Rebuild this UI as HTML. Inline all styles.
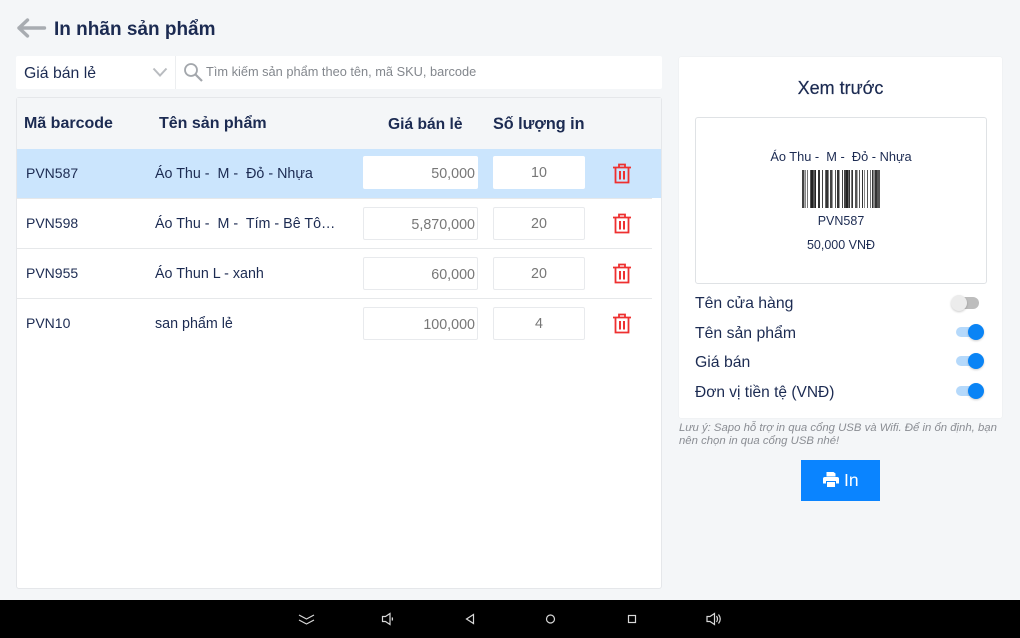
<!DOCTYPE html>
<html lang="vi"><head><meta charset="utf-8"><title>In nhãn sản phẩm</title>
<style>
html,body{margin:0;padding:0}
body{width:1020px;height:638px;overflow:hidden;background:#f4f6f8;position:relative;font-family:"Liberation Sans",sans-serif;color:#1c2b52}
.a{position:absolute}
.t{position:absolute;white-space:nowrap;line-height:20px;height:20px}
.b{font-weight:bold}
.h{font-weight:bold;font-size:16px}
.c1{font-size:14.300px}
.n{font-size:14.300px}
.l{font-size:15.800px}
.inp{position:absolute;box-sizing:border-box;background:#fff;border:1px solid #e8eaed;border-radius:2px;color:#777;font-size:14.300px;line-height:31px;height:33px}
.r{text-align:right;padding-right:2px;width:115px;left:363px;line-height:35px}
.c{text-align:center;width:92px;left:493px;line-height:32px}
.line{position:absolute;left:17px;width:635px;height:1px;background:#e6e8ea}
.sw{position:absolute;left:956px;width:29px;height:18px}
.sw i{position:absolute;left:0;top:4px;width:24px;height:10px;border-radius:5px;background:#b5d9fb}
.sw b{position:absolute;left:12px;top:1px;width:16px;height:16px;border-radius:50%;background:#0a84f5;box-shadow:0 1px 2px rgba(0,0,0,.2)}
</style></head><body>
<svg class="a" style="left:15px;top:16px" width="32" height="24" viewBox="0 0 32 24"><path d="M12.500 4 4 12l8.500 8M4 12h25.500" fill="none" stroke="#a8acb1" stroke-width="3.400" stroke-linejoin="round" stroke-linecap="round"/></svg>
<div class="t b" style="left:54px;top:19px;font-size:19px;line-height:22px;height:22px">In nhãn sản phẩm</div>

<div class="a" style="left:16px;top:56px;width:646px;height:33px;background:#fff;border-radius:2px"></div>
<div class="a" style="left:175px;top:56px;width:1px;height:33px;background:#eceef0"></div>
<div class="t" style="left:24px;top:64px;font-size:15.800px">Giá bán lẻ</div>
<svg class="a" style="left:152px;top:67px" width="16" height="11" viewBox="0 0 16 11"><path d="M1.500 1.500 8 8.500 14.500 1.500" fill="none" stroke="#b9bcc0" stroke-width="2"/></svg>
<svg class="a" style="left:183px;top:62px" width="21" height="21" viewBox="0 0 21 21"><circle cx="8" cy="8" r="6" fill="none" stroke="#a3a7ac" stroke-width="1.800"/><path d="m12.500 12.500 6.500 6.500" stroke="#a3a7ac" stroke-width="2.200"/></svg>
<div class="t" style="left:206px;top:62px;font-size:12.800px;color:#83878d">Tìm kiếm sản phẩm theo tên, mã SKU, barcode</div>

<div class="a" style="left:16px;top:97px;width:646px;height:492px;box-sizing:border-box;background:#fff;border:1px solid #e5e7ea;border-radius:3px"></div>
<div class="a" style="left:17px;top:98px;width:644px;height:51px;background:#f4f6f8"></div>
<div class="t h" style="left:24px;top:114px">Mã barcode</div>
<div class="t h" style="left:159px;top:114px">Tên sản phẩm</div>
<div class="t h" style="left:388px;top:115px;font-size:15.600px">Giá bán lẻ</div>
<div class="t h" style="left:493px;top:114px;font-size:16.200px">Số lượng in</div>

<div class="a" style="left:17px;top:149px;width:644px;height:49px;background:#cbe5fd"></div>
<div class="line" style="top:198px"></div><div class="line" style="top:248px"></div><div class="line" style="top:298px"></div>

<div class="t" style="left:26px;top:163px;font-size:14px">PVN587</div>
<div class="t n" style="left:155px;top:164px">Áo Thu -&nbsp; M -&nbsp; Đỏ - Nhựa</div>
<div class="inp r" style="top:156px;border-color:#fff">50,000</div>
<div class="inp c" style="top:156px;border-color:#fff">10</div>

<div class="t" style="left:26px;top:213px;font-size:14px">PVN598</div>
<div class="t n" style="left:155px;top:214px">Áo Thu -&nbsp; M -&nbsp; Tím - Bê Tô…</div>
<div class="inp r" style="top:207px">5,870,000</div>
<div class="inp c" style="top:207px">20</div>

<div class="t" style="left:26px;top:263px;font-size:14px">PVN955</div>
<div class="t c1" style="left:155px;top:264px">Áo Thun L - xanh</div>
<div class="inp r" style="top:257px">60,000</div>
<div class="inp c" style="top:257px">20</div>

<div class="t" style="left:26px;top:313px;font-size:14px">PVN10</div>
<div class="t c1" style="left:155px;top:314px">san phẩm lẻ</div>
<div class="inp r" style="top:307px">100,000</div>
<div class="inp c" style="top:307px">4</div>

<svg width="0" height="0" style="position:absolute"><defs><g id="tr" fill="none" stroke="#ee3030" stroke-width="1.800"><path d="M0 4.500h18M6 4V1.500h6V4M2.500 4.500V19.500h13V4.500"/><path d="M7 8v8.500M11 8v8.500" stroke-width="2"/></g></defs></svg>
<svg class="a" style="left:613px;top:163px" width="18" height="21"><use href="#tr"/></svg>
<svg class="a" style="left:613px;top:213px" width="18" height="21"><use href="#tr"/></svg>
<svg class="a" style="left:613px;top:263px" width="18" height="21"><use href="#tr"/></svg>
<svg class="a" style="left:613px;top:313px" width="18" height="21"><use href="#tr"/></svg>

<div class="a" style="left:679px;top:57px;width:323px;height:361px;background:#fff;border-radius:2px;box-shadow:0 0 1px rgba(0,0,0,.1)"></div>
<div class="t" style="left:679px;width:323px;text-align:center;top:78px;font-size:18px;-webkit-text-stroke:.2px #1c2b52">Xem trước</div>
<div class="a" style="left:695px;top:117px;width:292px;height:167px;box-sizing:border-box;border:1px solid #dfe2e5;border-radius:3px;background:#fff"></div>
<div class="t" style="left:695px;width:292px;text-align:center;top:147px;font-size:12.800px">Áo Thu -&nbsp; M -&nbsp; Đỏ - Nhựa</div>
<svg class="a" style="left:798px;top:170px" width="86" height="38" viewBox="0 0 86 38" shape-rendering="crispEdges">
<rect x="4" width="2" height="38" fill="#444"/><rect x="6" width="1" height="38" fill="#aaa"/><rect x="7" width="1" height="38" fill="#888"/><rect x="9" width="1" height="38" fill="#777"/>
<rect x="12" width="1" height="38" fill="#555"/><rect x="13" width="2" height="38" fill="#222"/><rect x="15" width="2" height="38" fill="#555"/><rect x="17" width="1" height="38" fill="#222"/>
<rect x="20" width="2" height="38" fill="#333"/><rect x="24" width="1" height="38" fill="#444"/><rect x="27" width="1" height="38" fill="#666"/><rect x="28" width="2" height="38" fill="#333"/><rect x="30" width="1" height="38" fill="#888"/>
<rect x="32" width="2" height="38" fill="#444"/><rect x="34" width="1" height="38" fill="#999"/><rect x="37" width="1" height="38" fill="#555"/><rect x="39" width="2" height="38" fill="#333"/><rect x="41" width="1" height="38" fill="#999"/>
<rect x="44" width="1" height="38" fill="#444"/><rect x="46" width="2" height="38" fill="#444"/><rect x="48" width="2" height="38" fill="#222"/><rect x="50" width="1" height="38" fill="#666"/><rect x="51" width="1" height="38" fill="#333"/><rect x="53" width="1" height="38" fill="#777"/><rect x="54" width="1" height="38" fill="#333"/>
<rect x="57" width="2" height="38" fill="#555"/><rect x="59" width="1" height="38" fill="#aaa"/><rect x="61" width="1" height="38" fill="#555"/><rect x="64" width="1" height="38" fill="#333"/><rect x="66" width="1" height="38" fill="#888"/>
<rect x="69" width="1" height="38" fill="#555"/><rect x="72" width="1" height="38" fill="#777"/><rect x="74" width="1" height="38" fill="#333"/><rect x="75" width="2" height="38" fill="#888"/><rect x="77" width="2" height="38" fill="#333"/><rect x="79" width="3" height="38" fill="#555"/>
</svg>
<div class="t" style="left:695px;width:292px;text-align:center;top:211px;font-size:12.500px">PVN587</div>
<div class="t" style="left:695px;width:292px;text-align:center;top:235px;font-size:12.500px">50,000 VNĐ</div>

<div class="t l" style="left:695px;top:294px">Tên cửa hàng</div>
<div class="t l" style="left:695px;top:324px">Tên sản phẩm</div>
<div class="t l" style="left:695px;top:353px">Giá bán</div>
<div class="t" style="left:695px;top:383px;font-size:15.500px">Đơn vị tiền tệ (VNĐ)</div>
<div class="a" style="left:952px;top:297px;width:27px;height:12px;border-radius:6px;background:#bdbdbd"></div>
<div class="a" style="left:951px;top:295px;width:16px;height:16px;border-radius:50%;background:#ececec;box-shadow:0 1px 2px rgba(0,0,0,.2)"></div>
<div class="sw" style="top:323px"><i></i><b></b></div>
<div class="sw" style="top:352px"><i></i><b></b></div>
<div class="sw" style="top:382px"><i></i><b></b></div>

<div class="t" style="left:679px;top:418px;font-size:11.350px;font-style:italic;color:#8a8d93;line-height:20px">Lưu ý: Sapo hỗ trợ in qua cổng USB và Wifi. Để in ổn định, bạn</div>
<div class="t" style="left:679px;top:431px;font-size:11.350px;font-style:italic;color:#8a8d93;line-height:20px">nên chọn in qua cổng USB nhé!</div>

<div class="a" style="left:801px;top:460px;width:79px;height:41px;background:#0a84ff"></div>
<svg class="a" style="left:823px;top:472px" width="16" height="15" viewBox="0 0 16 15"><path fill="#fff" fill-rule="evenodd" d="M3.500 0H10.500L12.500 1.500V4.500H3.500zM1.800 5H14.200A1.800 1.800 0 0 1 16 6.800V11.500H13V9H3V11.500H0V6.800A1.800 1.800 0 0 1 1.800 5zM4 10H12V15H4z"/></svg>
<div class="t" style="left:844px;top:470px;font-size:17.500px;color:#fff">In</div>

<div class="a" style="left:0;top:600px;width:1020px;height:38px;background:#000"></div>
<svg class="a" style="left:280px;top:600px" width="460" height="38" viewBox="0 0 460 38" fill="none" stroke="#d8d8d8" stroke-width="1.200">
<path d="M19 15l7.500 4 7.500-4M19 20l7.500 4 7.500-4"/>
<path d="M102.500 16.500h3l4.500-3v11l-4.500-3h-3zM112 17.500q1 1.500 0 3"/>
<path d="M193.500 14.500v9l-7-4.500z"/>
<circle cx="270.500" cy="19" r="4"/>
<rect x="348.500" y="15.500" width="7" height="7"/>
<path d="M427 16.500h3l4.500-3v11l-4.500-3h-3zM436.500 16q2 3 0 6M438.500 14.500q3.500 4.500 0 9"/>
</svg>
</body></html>
